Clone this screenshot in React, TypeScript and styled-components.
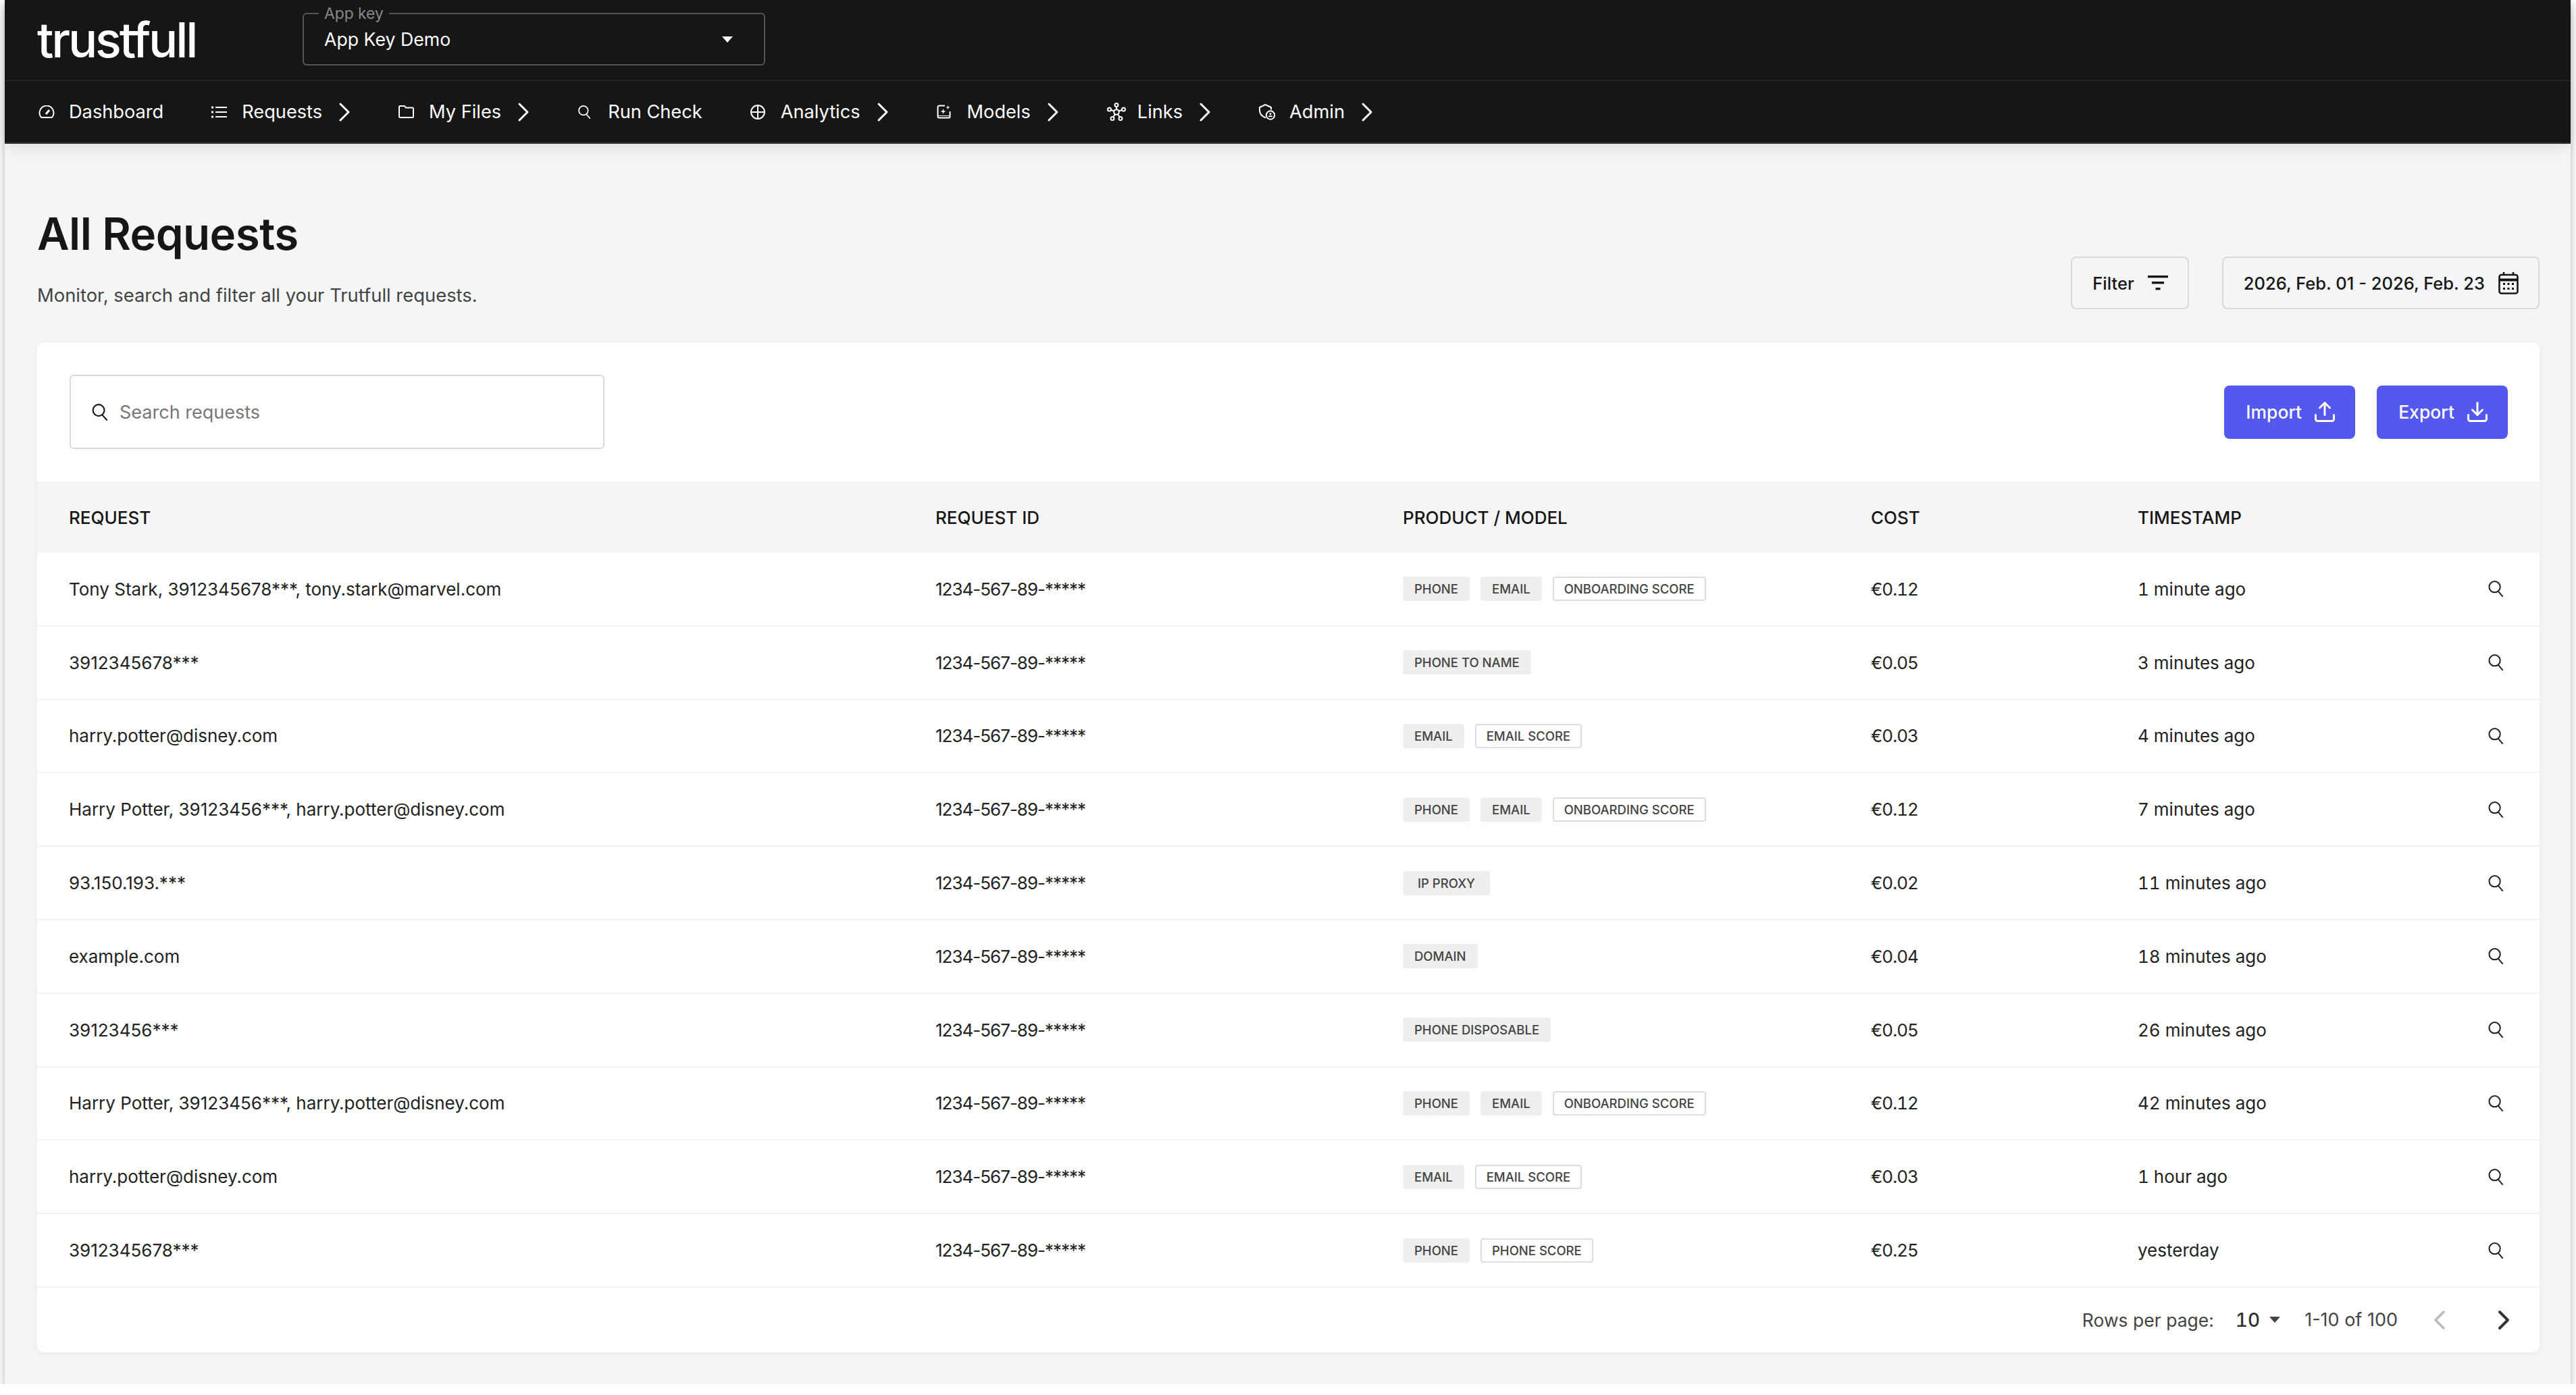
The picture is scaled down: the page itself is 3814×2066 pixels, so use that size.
import { FC, ReactNode } from "react";
import styled, { createGlobalStyle } from "styled-components";
import { ChevronLeft, ChevronRight, Download, Upload } from "lucide-react";

const GlobalStyle = createGlobalStyle`
  html, body { margin: 0; padding: 0; background: #fff; }
  body { font-family: Inter, "Liberation Sans", sans-serif; }
  * { box-sizing: border-box; }
`;

const Frame = styled.div`
  width: 3799px;
  height: 2050px;
  margin-left: 7px;
  background: #f4f5f7;
  box-shadow: 0 6px 12px rgba(0, 0, 0, 0.3);
  display: flex;
  flex-direction: column;
`;

const Header = styled.header`
  background: #161616;
  color: #fff;
  box-shadow: 0 4px 24px rgba(0, 0, 0, 0.1);
`;

const TopBar = styled.div`
  height: 120px;
  padding-left: 48px;
  display: flex;
  align-items: center;
  border-bottom: 2px solid #242424;
`;

const Logo = styled.div`
  width: 393px;
  font-size: 72px;
  font-weight: 500;
  letter-spacing: -3.2px;
  line-height: 1;
`;

const KeySelect = styled.div`
  position: relative;
  width: 685px;
  height: 78px;
  margin-top: -2px;
  padding: 0 46px 0 30px;
  border: 2px solid #555;
  border-radius: 6px;
  display: flex;
  align-items: center;
  justify-content: space-between;
  font-size: 26.700px;
`;

const KeyLabel = styled.span`
  position: absolute;
  top: -14px;
  left: 22px;
  padding: 0 8px;
  background: #161616;
  color: #888;
  font-size: 22.800px;
  line-height: 26px;
`;

const Caret = styled.span<{ $size: number; $color: string }>`
  flex: none;
  width: 0;
  height: 0;
  border-left: ${(p) => p.$size}px solid transparent;
  border-right: ${(p) => p.$size}px solid transparent;
  border-top: ${(p) => p.$size + 1}px solid ${(p) => p.$color};
`;

const NavBar = styled.nav`
  height: 93px;
  padding-left: 50px;
  display: flex;
  align-items: center;
  gap: 71px;
  border-bottom: 2px solid #333;
  font-size: 27.200px;
`;

const NavItem = styled.div`
  display: flex;
  align-items: center;
  gap: 17px;
`;

const NavIcon = styled.span`
  width: 28px;
  display: flex;
  align-items: center;
`;

const NavChevron = styled(ChevronRight)`
  width: 48px;
  height: 48px;
  margin: 0 -15px 0 -8px;
`;

const Main = styled.main`
  flex: 1;
  padding: 0 46px 0 48px;
  display: flex;
  flex-direction: column;
`;

const PageHead = styled.div`
  height: 294px;
  display: flex;
  justify-content: space-between;
  align-items: flex-start;
`;

const Title = styled.h1`
  margin: 95px 0 0;
  font-size: 65.400px;
  font-weight: 600;
  line-height: 78px;
  color: #161616;
  letter-spacing: -0.5px;
`;

const Subtitle = styled.p`
  margin: 34px 0 0;
  font-size: 27.400px;
  line-height: 34px;
  color: #444;
`;

const HeadActions = styled.div`
  margin-top: 167px;
  display: flex;
  gap: 49px;
`;

const OutlineButton = styled.div`
  height: 78px;
  padding: 0 29px 0 30px;
  border: 2px solid #d9d9dc;
  border-radius: 8px;
  display: flex;
  align-items: center;
  gap: 20px;
  font-size: 25.500px;
  font-weight: 500;
  color: #161616;
`;

const Card = styled.section`
  height: 1496px;
  background: #fff;
  border-radius: 10px;
  box-shadow: 0 2px 6px rgba(0, 0, 0, 0.06);
  overflow: hidden;
  display: flex;
  flex-direction: column;
`;

const Toolbar = styled.div`
  height: 206px;
  padding: 0 47px 0 48px;
  display: flex;
  align-items: center;
  justify-content: space-between;
`;

const SearchBox = styled.div`
  width: 792px;
  height: 110px;
  padding: 0 30px;
  border: 2px solid #d9d9d9;
  border-radius: 6px;
  display: flex;
  align-items: center;
  gap: 17px;
  font-size: 27px;
  color: #777;
  svg {
    color: #161616;
  }
`;

const ToolbarActions = styled.div`
  display: flex;
  gap: 32px;
`;

const PrimaryButton = styled.div`
  height: 79px;
  padding: 0 27px 0 32px;
  background: #5558ef;
  border-radius: 8px;
  display: flex;
  align-items: center;
  gap: 16px;
  font-size: 26.500px;
  font-weight: 500;
  color: #fff;
`;

const gridColumns = "1283px 692px 693px 395px 1fr 24px";

const HeaderRow = styled.div`
  height: 106px;
  padding: 0 53px 0 47px;
  background: #f5f5f5;
  display: grid;
  grid-template-columns: ${gridColumns};
  align-items: center;
  font-size: 26px;
  font-weight: 500;
  color: #161616;
`;

const Row = styled.div`
  height: 108.800px;
  padding: 0 53px 0 47px;
  border-bottom: 2px solid #f3f3f7;
  display: grid;
  grid-template-columns: ${gridColumns};
  align-items: center;
  font-size: 26px;
  color: #222;
`;

const RequestId = styled.span`
  letter-spacing: -1px;
`;

const Cost = styled.span`
  font-variant-numeric: tabular-nums;
  letter-spacing: -1px;
`;

const Timestamp = styled.span`
  font-variant-numeric: tabular-nums;
`;

const Chips = styled.div`
  display: flex;
  gap: 16px;
`;

const Chip = styled.span<{ $outline?: boolean; $wide?: boolean }>`
  height: 36px;
  padding: 0 ${(p) => (p.$wide ? 20 : 15)}px;
  border-radius: 4px;
  border: 2px solid ${(p) => (p.$outline ? "#ddd" : "#eee")};
  background: ${(p) => (p.$outline ? "#fff" : "#eee")};
  display: flex;
  align-items: center;
  font-size: 18.500px;
  font-weight: 500;
  color: #444;
`;

const Footer = styled.div`
  flex: 1;
  padding-right: 29px;
  display: flex;
  align-items: center;
  justify-content: flex-end;
  font-size: 26.500px;
  color: #444;
`;

const PerPage = styled.span`
  margin: 0 14px 0 32px;
  font-size: 28px;
  font-weight: 500;
  font-variant-numeric: tabular-nums;
  color: #333;
`;

const PerPageCaret = styled(Caret)`
  margin-right: 36px;
`;

const PageRange = styled.span`
  font-size: 27px;
`;

const PagerIcon = styled.span<{ $gap: number; $color: string }>`
  margin-left: ${(p) => p.$gap}px;
  color: ${(p) => p.$color};
  display: flex;
`;

// the icons below are not in the packages in this shape, drawn from the reference
const SearchIcon: FC<{ size: number }> = ({ size }) => (
  <svg width={size} height={size} viewBox="0 0 24 26" fill="none" stroke="currentColor" strokeWidth="2.200" strokeLinecap="round">
    <circle cx="10.500" cy="10" r="8.800" />
    <path d="M16.500 17.500L23 25" />
  </svg>
);

const GaugeIcon: FC = () => (
  <svg width="24" height="19" viewBox="0 0 24 19" fill="none" stroke="currentColor" strokeWidth="2">
    <path d="M5 18h14a3 3 0 0 0 2-1.500A10.500 10.500 0 1 0 3 16.500 3 3 0 0 0 5 18z" />
    <path d="M11 13l5-6" strokeWidth="3" />
  </svg>
);

const ListIcon: FC = () => (
  <svg width="23" height="18" viewBox="0 0 23 18" fill="none" stroke="currentColor" strokeWidth="2">
    <path d="M6 2h17M6 9h17M6 16h17" />
    <path d="M0 2h3M0 9h3M0 16h3" strokeWidth="3" />
  </svg>
);

const FolderIcon: FC = () => (
  <svg width="23" height="19" viewBox="0 0 23 19" fill="none" stroke="currentColor" strokeWidth="2">
    <path d="M1 2.500A1.500 1.500 0 0 1 2.500 1H9l2 2.500h9.500A1.500 1.500 0 0 1 22 5v11.500a1.500 1.500 0 0 1-1.500 1.500h-18A1.500 1.500 0 0 1 1 16.500z" />
  </svg>
);

const AnalyticsIcon: FC = () => (
  <svg width="22" height="22" viewBox="0 0 22 22" fill="none" stroke="currentColor" strokeWidth="2">
    <circle cx="11" cy="11" r="10" />
    <path d="M11 1v20M1 11h20" />
  </svg>
);

const ModelsIcon: FC = () => (
  <svg width="22" height="21" viewBox="0 0 22 21" fill="none" stroke="currentColor" strokeWidth="2">
    <path d="M12 1.500H3.500a2 2 0 0 0-2 2v14a2 2 0 0 0 2 2h14a2 2 0 0 0 2-2V10" />
    <path d="M1.500 16.500h18" strokeWidth="1" />
    <path d="M9.500 6l1 3 3 1-3 1-1 3-1-3-3-1 3-1z" fill="currentColor" stroke="none" />
    <path d="M16.500 1l.8 2.200L19.500 4l-2.200.8-.8 2.200-.8-2.200L13.500 4l2.200-.8z" fill="currentColor" stroke="none" />
  </svg>
);

const LinksIcon: FC = () => (
  <svg width="28" height="27" viewBox="0 0 28 27" fill="none" stroke="currentColor" strokeWidth="2">
    <circle cx="14" cy="14" r="3.800" />
    <circle cx="14" cy="3.500" r="2.500" />
    <circle cx="3.500" cy="10" r="2.500" />
    <circle cx="24.500" cy="10" r="2.500" />
    <circle cx="8" cy="23.500" r="2.500" />
    <circle cx="20" cy="23.500" r="2.500" />
    <path d="M14 6v4.200M6 11l4.500 1.500M22 11l-4.500 1.500M9.300 21.300l2.700-4.300M18.700 21.300L16 17" />
  </svg>
);

const AdminIcon: FC = () => (
  <svg width="24" height="24" viewBox="0 0 24 24" fill="none" stroke="currentColor" strokeWidth="2">
    <path d="M10 20.500C5 18.500 1 15 1 9.500V5l8.500-4L18 5v3.500" />
    <circle cx="17" cy="16.500" r="6.200" />
    <circle cx="17" cy="14.500" r="1.500" fill="currentColor" stroke="none" />
    <path d="M14.500 19c.5-1.500 4.500-1.500 5 0" />
  </svg>
);

const FilterIcon: FC = () => (
  <svg width="30" height="22" viewBox="0 0 30 22" fill="currentColor">
    <rect x="0" y="0" width="30" height="3.400" />
    <rect x="6" y="9" width="18" height="3.400" />
    <rect x="11.500" y="18" width="7" height="3.400" />
  </svg>
);

const CalendarIcon: FC = () => (
  <svg width="30" height="34" viewBox="0 0 30 34" fill="none" stroke="currentColor" strokeWidth="2.600">
    <rect x="1.500" y="5" width="27" height="27.500" rx="3" />
    <path d="M1.500 12.500h27" strokeWidth="4" />
    <path d="M8 1v5M22 1v5" />
    <path d="M7 18.500h3M13.500 18.500h3M20 18.500h3M7 25.500h3M13.500 25.500h3M20 25.500h3" strokeWidth="3" />
  </svg>
);

type NavEntry = { label: string; icon: ReactNode; more?: boolean };

const navEntries: NavEntry[] = [
  { label: "Dashboard", icon: <GaugeIcon /> },
  { label: "Requests", icon: <ListIcon />, more: true },
  { label: "My Files", icon: <FolderIcon />, more: true },
  { label: "Run Check", icon: <SearchIcon size={20} /> },
  { label: "Analytics", icon: <AnalyticsIcon />, more: true },
  { label: "Models", icon: <ModelsIcon />, more: true },
  { label: "Links", icon: <LinksIcon />, more: true },
  { label: "Admin", icon: <AdminIcon />, more: true },
];

const onboarding = ["PHONE", "EMAIL", "*ONBOARDING SCORE"];
const emailScore = ["EMAIL", "*EMAIL SCORE"];

const rows: [string, string[], string, string][] = [
  ["Tony Stark, 3912345678***, tony.stark@marvel.com", onboarding, "€0.12", "1 minute ago"],
  ["3912345678***", ["PHONE TO NAME"], "€0.05", "3 minutes ago"],
  ["harry.potter@disney.com", emailScore, "€0.03", "4 minutes ago"],
  ["Harry Potter, 39123456***, harry.potter@disney.com", onboarding, "€0.12", "7 minutes ago"],
  ["93.150.193.***", ["IP PROXY"], "€0.02", "11 minutes ago"],
  ["example.com", ["DOMAIN"], "€0.04", "18 minutes ago"],
  ["39123456***", ["PHONE DISPOSABLE"], "€0.05", "26 minutes ago"],
  ["Harry Potter, 39123456***, harry.potter@disney.com", onboarding, "€0.12", "42 minutes ago"],
  ["harry.potter@disney.com", emailScore, "€0.03", "1 hour ago"],
  ["3912345678***", ["PHONE", "*PHONE SCORE"], "€0.25", "yesterday"],
];

export default function App() {
  return (
    <>
      <GlobalStyle />
      <Frame>
        <Header>
          <TopBar>
            <Logo>trustfull</Logo>
            <KeySelect>
              <KeyLabel>App key</KeyLabel>
              App Key Demo
              <Caret $size={8} $color="#fff" />
            </KeySelect>
          </TopBar>
          <NavBar>
            {navEntries.map((entry) => (
              <NavItem key={entry.label}>
                <NavIcon>{entry.icon}</NavIcon>
                {entry.label}
                {entry.more && <NavChevron strokeWidth={1.5} />}
              </NavItem>
            ))}
          </NavBar>
        </Header>
        <Main>
          <PageHead>
            <div>
              <Title>All Requests</Title>
              <Subtitle>Monitor, search and filter all your Trutfull requests.</Subtitle>
            </div>
            <HeadActions>
              <OutlineButton>
                Filter
                <FilterIcon />
              </OutlineButton>
              <OutlineButton>
                2026, Feb. 01 - 2026, Feb. 23
                <CalendarIcon />
              </OutlineButton>
            </HeadActions>
          </PageHead>
          <Card>
            <Toolbar>
              <SearchBox>
                <SearchIcon size={25} />
                Search requests
              </SearchBox>
              <ToolbarActions>
                <PrimaryButton>
                  Import
                  <Upload size={36} strokeWidth={2} />
                </PrimaryButton>
                <PrimaryButton>
                  Export
                  <Download size={36} strokeWidth={2} />
                </PrimaryButton>
              </ToolbarActions>
            </Toolbar>
            <HeaderRow>
              <span>REQUEST</span>
              <span>REQUEST ID</span>
              <span>PRODUCT / MODEL</span>
              <span>COST</span>
              <span>TIMESTAMP</span>
            </HeaderRow>
            {rows.map(([request, chips, cost, time], i) => (
              <Row key={i}>
                <span>{request}</span>
                <RequestId>1234-567-89-*****</RequestId>
                <Chips>
                  {chips.map((chip) => (
                    <Chip key={chip} $outline={chip.startsWith("*")} $wide={chip === "IP PROXY"}>
                      {chip.replace("*", "")}
                    </Chip>
                  ))}
                </Chips>
                <Cost>{cost}</Cost>
                <Timestamp>{time}</Timestamp>
                <SearchIcon size={24} />
              </Row>
            ))}
            <Footer>
              Rows per page:
              <PerPage>10</PerPage>
              <PerPageCaret $size={8} $color="#444" />
              <PageRange>1-10 of 100</PageRange>
              <PagerIcon $gap={38} $color="#bbb">
                <ChevronLeft size={48} strokeWidth={1.8} />
              </PagerIcon>
              <PagerIcon $gap={47} $color="#333">
                <ChevronRight size={48} strokeWidth={2} />
              </PagerIcon>
            </Footer>
          </Card>
        </Main>
      </Frame>
    </>
  );
}
